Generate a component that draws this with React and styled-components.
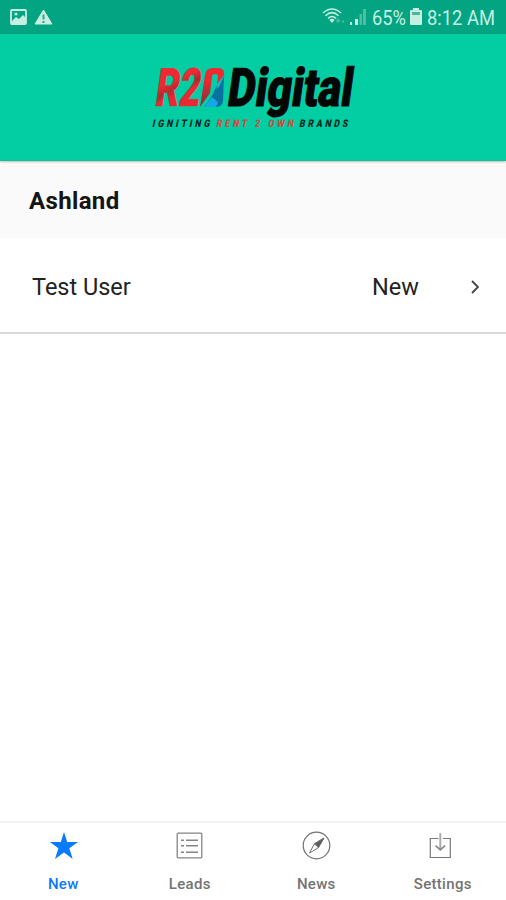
import React from "react";
import styled, { createGlobalStyle } from "styled-components";

const GlobalStyle = createGlobalStyle`
  * { box-sizing: border-box; }
  body { margin: 0; background: #fff; font-family: Roboto, "Liberation Sans", sans-serif; }
`;

const Screen = styled.div`
  display: flex;
  flex-direction: column;
  width: 100%;
  height: 100vh;
  overflow: hidden;
  background: #fff;
`;

const StatusBar = styled.div`
  flex: none;
  display: flex;
  align-items: center;
  justify-content: space-between;
  height: 34px;
  padding: 0 11px 0 9px;
  background: #03a481;
`;

const StatusGroup = styled.div`
  display: flex;
  align-items: center;
  height: 34px;
`;

const StatusText = styled.svg`
  display: block;
  width: ${(p) => p.$width}px;
  height: 34px;
  margin-left: ${(p) => p.$gap}px;
  fill: #c6efe4;
  font: 400 20px Roboto, "Liberation Sans", sans-serif;
  overflow: visible;
`;

const Glyph = styled.svg`
  display: block;
  flex: none;
  margin-left: ${(p) => p.$gap || 0}px;
  overflow: visible;
`;

const Header = styled.header`
  flex: none;
  display: flex;
  justify-content: center;
  height: 127px;
  background: #02cda3;
  border-bottom: 1px solid #12bd98;
  box-shadow: 0 1px 2px rgba(0, 0, 0, 0.25);
  z-index: 1;
`;

const Logo = styled.svg`
  display: block;
  width: 226px;
  height: 126px;
  overflow: visible;
  font-family: Roboto, "Liberation Sans", sans-serif;
  font-weight: 900;
`;

const SectionTitle = styled.h2`
  flex: none;
  display: flex;
  align-items: center;
  height: 77px;
  margin: 0;
  padding: 3px 29px 0;
  background: #fafafa;
  color: #151515;
  font-size: 24px;
  font-weight: 700;
  letter-spacing: 0.35px;
`;

const LeadRow = styled.div`
  flex: none;
  display: flex;
  align-items: center;
  height: 96px;
  padding: 4px 26px 0 32px;
  border-bottom: 2px solid #d8d8d8;
  color: #222;
  font-size: 23.5px;
`;

const LeadName = styled.span`
  flex: 1;
`;

const LeadStatus = styled.span`
  width: 99px;
`;

const Spacer = styled.main`
  flex: 1;
`;

const TabBar = styled.nav`
  flex: none;
  display: grid;
  grid-template-columns: repeat(4, 1fr);
  height: 79px;
  border-top: 2px solid #f3f3f3;
`;

const Tab = styled.div`
  display: flex;
  flex-direction: column;
  align-items: center;
  padding-top: 8px;
  color: ${(p) => (p.$active ? "#0b79fb" : "#737373")};
  font-size: 15px;
  font-weight: 500;
  letter-spacing: 0.3px;
`;

const TabLabel = styled.span`
  margin-top: 14px;
  line-height: 18px;
`;

const StarIcon = () => (
  <Glyph width="30" height="30" viewBox="0 0 30 30">
    <path d="M16 1 19.2 11H30L21.3 17.2 24.7 28 16 21.4 7 28 10.4 17.2 2 11H12.8Z" fill="#087bff" />
  </Glyph>
);

const ListIcon = () => (
  <Glyph width="30" height="30" viewBox="0 0 30 30" fill="none" stroke="#858585">
    <rect x="2.2" y="2.2" width="24.6" height="24.6" rx="1" strokeWidth="1.3" />
    <path d="M6 9.2h3M6 14.8h3M6 21.2h3M11 9.2h12M11 14.8h12M11 21.2h12" strokeWidth="1.5" />
  </Glyph>
);

const CompassIcon = () => (
  <Glyph width="30" height="30" viewBox="0 0 30 30" fill="none" stroke="#707070">
    <circle cx="15.5" cy="14.5" r="13.3" strokeWidth="1.2" />
    <path d="M23 7 17 17 8.5 22 13.3 12.8Z" strokeWidth="1" />
    <path d="M23 7 17.5 16.7 13.3 12.8Z" fill="#606060" strokeWidth=".6" />
  </Glyph>
);

const DownloadIcon = () => (
  <Glyph width="30" height="30" viewBox="0 0 30 30" fill="none">
    <path d="M10.5 7.5H2.3V26.5H22.3V7.5H15" stroke="#777" strokeWidth="1.2" />
    <path d="M12.3 2.2V18" stroke="#aaa" strokeWidth="2" />
    <path d="m7.5 14.6 4.8 4.2 4.8-4.2" stroke="#888" strokeWidth="1.7" />
  </Glyph>
);

const tabs = [
  { label: "New", Icon: StarIcon, active: true },
  { label: "Leads", Icon: ListIcon },
  { label: "News", Icon: CompassIcon },
  { label: "Settings", Icon: DownloadIcon },
];

const BrandLogo = () => (
  <Logo viewBox="140 34 226 126">
    <defs>
      <linearGradient id="redInk" gradientUnits="userSpaceOnUse" x1="154" y1="-38" x2="172" y2="0">
        <stop offset="0.45" stopColor="#ee2931" />
        <stop offset="0.65" stopColor="#a82b32" />
        <stop offset="0.8" stopColor="#e92932" />
      </linearGradient>
      <linearGradient id="bladeInk" x1="0" y1="0" x2="0" y2="1">
        <stop offset="0.3" stopColor="#ee2931" />
        <stop offset="1" stopColor="#7c3038" />
      </linearGradient>
    </defs>
    <g transform="translate(0 106) skewX(-8)" fontSize="53">
      <text x="154" y="0" textLength="45" lengthAdjust="spacingAndGlyphs" fill="url(#redInk)" stroke="#e92932" strokeWidth=".5">R2</text>
      <text x="226" y="0" textLength="125" lengthAdjust="spacingAndGlyphs" fill="#020605" stroke="#020605" strokeWidth="1">Digital</text>
    </g>
    <path d="M200 107 205 75Q206 68 213 68H218Q225 68 224 75L217 84 218 76Q218 74 215 74T212 77L210 93Z" fill="url(#bladeInk)" />
    <path d="M224 76 223 101Q222 107 216 107H204L212 96 216 87Z" fill="#08719f" />
    <path d="m204 107 8-10 6 5-2 5Z" fill="#12a9e5" />
    <path d="m224 76-6 8-2 5 3-2Z" fill="#20b7d8" />
    <g transform="translate(0 127) skewX(-12)" fontSize="10.5">
      <text transform="translate(152 0) scale(.82 1)" textLength="70" fill="#04261f">IGNITING</text>
      <text transform="translate(216 0) scale(.82 1)" textLength="94" fill="#d34a3e">RENT 2 OWN</text>
      <text transform="translate(299 0) scale(.82 1)" textLength="59" fill="#04261f">BRANDS</text>
    </g>
  </Logo>
);

export default function App() {
  return (
    <Screen>
      <GlobalStyle />
      <StatusBar>
        <StatusGroup>
          <Glyph $gap={1} width="18" height="16" viewBox="0 0 18 16">
            <rect x="1" y="1" width="15" height="14" rx="1" fill="none" stroke="#c6efe4" strokeWidth="1.8" />
            <path d="M2 12 6 8l3 2 4-4 3 3v6H2Z" fill="#c6efe4" />
            <circle cx="6" cy="5" r="1.6" fill="#c6efe4" />
          </Glyph>
          <Glyph $gap={7} width="19" height="17" viewBox="0 0 19 17">
            <path d="M8.5 1 17 15H0Z" fill="#c6efe4" stroke="#c6efe4" strokeLinejoin="round" />
            <path d="M8.5 5.5v5M8.5 12v2" stroke="#3d9f86" strokeWidth="2" />
          </Glyph>
        </StatusGroup>
        <StatusGroup>
          <Glyph width="24" height="18" viewBox="0 0 24 18" fill="none" stroke="#c6efe4" strokeWidth="1.5">
            <path d="M1 5Q10-3 19 5M3.5 7.7Q10 1.5 16.5 7.7M6 10.4Q10 6.5 14 10.4" />
            <path d="M7.5 12Q10 9.5 12.5 12L10 15Z" fill="#c6efe4" stroke="none" />
            <path d="M16 10v4m-2-2 2 2 2-2M21 15v-3" stroke="#49b99c" strokeWidth="1.5" />
          </Glyph>
          <Glyph $gap={3} width="18" height="18" viewBox="0 0 18 18">
            <path d="M1 14h2v3H1ZM6 11h3v6H6Z" fill="#c6efe4" />
            <path d="M10.5 6h2.5v11h-2.5ZM14 1h3v16h-3Z" fill="#54bca1" />
          </Glyph>
          <StatusText $width={34} $gap={5} viewBox="0 0 34 34">
            <text x="0" y="25" textLength="34" lengthAdjust="spacingAndGlyphs">65%</text>
          </StatusText>
          <Glyph $gap={4} width="12" height="18" viewBox="0 0 12 18">
            <path d="M3 0h6v2h2q1 0 1 1v13q0 1-1 1H1q-1 0-1-1V3q0-1 1-1h2Z" fill="#c6efe4" />
            <path d="M2 4h8v3H2Z" fill="#4eb49a" />
          </Glyph>
          <StatusText $width={68} $gap={5} viewBox="0 0 68 34">
            <text x="0" y="25" textLength="68" lengthAdjust="spacingAndGlyphs">8:12 AM</text>
          </StatusText>
        </StatusGroup>
      </StatusBar>
      <Header>
        <BrandLogo />
      </Header>
      <SectionTitle>Ashland</SectionTitle>
      <LeadRow>
        <LeadName>Test User</LeadName>
        <LeadStatus>New</LeadStatus>
        <Glyph width="9" height="14" viewBox="0 0 9 14">
          <path d="m1 1 6 6-6 6" fill="none" stroke="#444" strokeWidth="1.8" />
        </Glyph>
      </LeadRow>
      <Spacer />
      <TabBar>
        {tabs.map(({ label, Icon, active }) => (
          <Tab key={label} $active={active}>
            <Icon />
            <TabLabel>{label}</TabLabel>
          </Tab>
        ))}
      </TabBar>
    </Screen>
  );
}
